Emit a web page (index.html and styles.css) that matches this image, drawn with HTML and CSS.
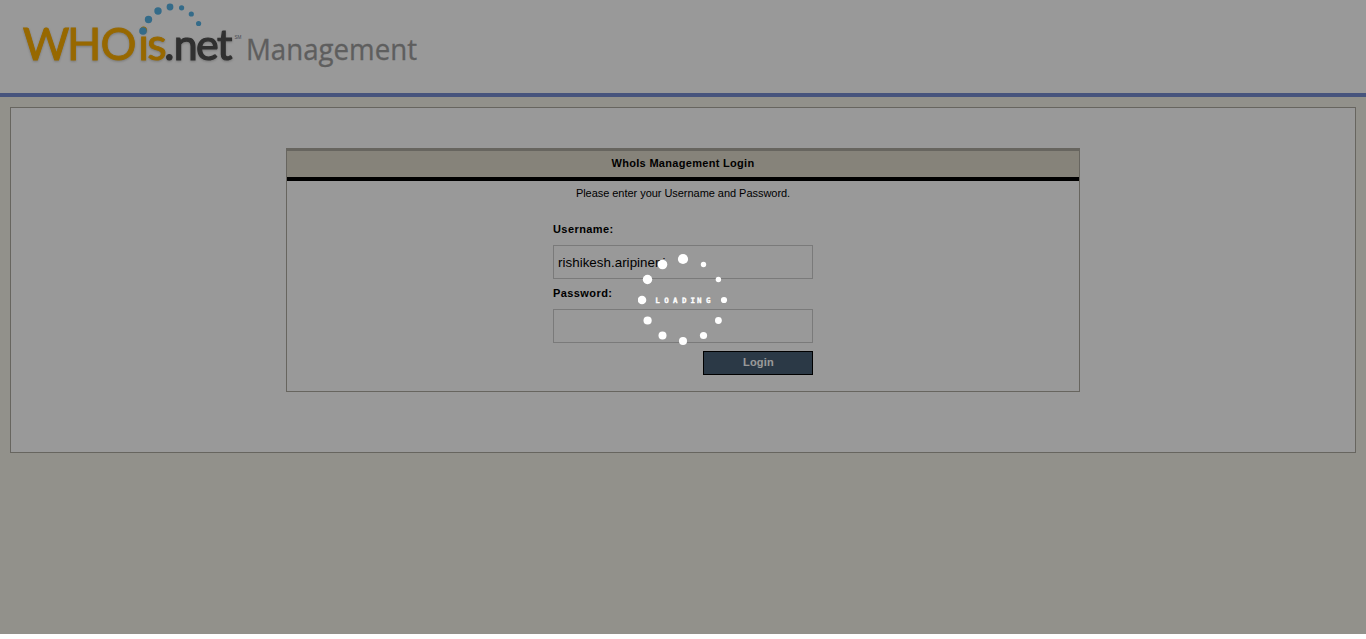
FILE: index.html
```html
<!DOCTYPE html>
<html lang="en">
<head>
<meta charset="utf-8">
<title>WhoIs Management Login</title>
<link rel="stylesheet" href="styles.css">
</head>
<body>
<div class="page">
  <header class="header">
    <svg class="logo" width="430" height="80" viewBox="0 0 430 80" role="img" aria-label="WHOis.net Management">
      <g class="wordmark">
        <text class="gold" x="22.8 67 100.6" y="60">WHO</text>
        <text class="gold" x="138.3 147.3" y="60">is</text>
        <text class="dark" x="164.3 173.8 196 217" y="60">.net</text>
      </g>
      <g class="arc">
        <circle cx="143" cy="31" r="3.8"/>
        <circle cx="148.5" cy="19.5" r="3.7"/>
        <circle cx="158" cy="11" r="3.7"/>
        <circle cx="170" cy="7" r="3.4"/>
        <circle cx="181.6" cy="7.8" r="2.6"/>
        <circle cx="191.3" cy="14" r="2.6"/>
        <circle cx="198.6" cy="23.5" r="2.6"/>
      </g>
      <text class="mark" x="234.5" y="39" textLength="7" lengthAdjust="spacingAndGlyphs">SM</text>
      <text class="product" x="246" y="60" textLength="171" lengthAdjust="spacingAndGlyphs">Management</text>
    </svg>
  </header>
  <main class="content">
    <form class="login">
      <h1 class="login-title">WhoIs Management Login</h1>
      <p class="hint">Please enter your Username and Password.</p>
      <div class="fields">
        <label class="label" for="user">Username:</label>
        <input class="input" id="user" type="text" value="rishikesh.aripineni">
        <label class="label" for="pass">Password:</label>
        <input class="input" id="pass" type="password">
        <button class="button" type="button">Login</button>
      </div>
    </form>
  </main>
  <div class="overlay">
    <svg class="spinner" width="90" height="94" viewBox="638 253 90 94">
      <circle cx="683" cy="259" r="5.1"/>
      <circle cx="703.5" cy="264.5" r="2.7"/>
      <circle cx="718.4" cy="279.5" r="2.7"/>
      <circle cx="724" cy="300" r="3.1"/>
      <circle cx="718.4" cy="320.5" r="3.4"/>
      <circle cx="703.5" cy="335.5" r="3.6"/>
      <circle cx="683" cy="341" r="4"/>
      <circle cx="662.5" cy="335.5" r="4"/>
      <circle cx="647.6" cy="320.5" r="4.1"/>
      <circle cx="642" cy="300" r="4.3"/>
      <circle cx="647.5" cy="279.5" r="4.7"/>
      <circle cx="662.5" cy="264.5" r="4.8"/>
      <text class="loading" x="655.3 664.2 673 682 690.6 697 706" y="302.8">LOADING</text>
    </svg>
  </div>
</div>
</body>
</html>
```
FILE: styles.css
```css
* { box-sizing: border-box; }
body {
  margin: 0;
  background: #fff;
  font: 11px/13px "Liberation Sans", Arial, sans-serif;
  color: #000;
}
.page {
  position: relative;
  height: 634px;
  background: #f4f2e8;
}
.header {
  height: 97px;
  background: #fff;
  border-bottom: 4px solid #778dd0;
}
.logo { display: block; }
.wordmark {
  font: 45px Lato, sans-serif;
  filter: drop-shadow(0 1px 1px rgba(0, 0, 0, .22));
}
.gold { fill: #fcae00; stroke: #fcae00; stroke-width: .9; }
.dark { fill: #505050; stroke: #505050; stroke-width: 1.2; font-size: 43px; }
.arc { fill: #57b2e5; }
.mark { font: 5.5px "Liberation Sans", sans-serif; fill: #777a90; }
.product {
  font: 29px "Open Sans", sans-serif;
  fill: #9d9d9d;
  stroke: #9d9d9d;
  stroke-width: .3;
}
.content {
  height: 346px;
  margin: 10px 10px 0;
  padding-top: 40px;
  background: #fff;
  border: 1px solid #aca99f;
}
.login {
  width: 794px;
  height: 244px;
  margin: 0 auto;
  border: 1px solid #aca99f;
  border-top-width: 3px;
}
.login-title {
  height: 30px;
  margin: 0;
  padding-top: 6px;
  background: #e0dbcb;
  border-bottom: 4px solid #000;
  font-size: 11px;
  line-height: 13px;
  letter-spacing: .3px;
  text-align: center;
}
.hint {
  margin: 6px 0 23px;
  letter-spacing: -.04px;
  text-align: center;
}
.fields {
  display: flex;
  flex-direction: column;
  width: 260px;
  margin: 0 auto;
}
.label { height: 22px; font-weight: bold; letter-spacing: .42px; }
.input {
  height: 34px;
  margin: 0 0 8px;
  padding: 0 4px;
  border: 1px solid #ccc;
  border-radius: 0;
  background: #fff;
  font: 13.33px "Liberation Sans", Arial, sans-serif;
  letter-spacing: .04px;
  color: #000;
}
.button {
  align-self: flex-end;
  width: 110px;
  height: 24px;
  padding: 0 0 2px 1px;
  border: 1px solid #000;
  background: #495f76;
  color: #fff;
  font: bold 11px "Liberation Sans", Arial, sans-serif;
  letter-spacing: .2px;
}
.overlay {
  position: absolute;
  inset: 0;
  display: flex;
  justify-content: center;
  align-items: flex-start;
  padding-top: 253px;
  background: rgba(0, 0, 0, .4);
}
.spinner { fill: #fff; }
.loading {
  font: bold 7.5px "DejaVu Sans Mono", monospace;
  stroke: #fff;
  stroke-width: .3;
}
```
